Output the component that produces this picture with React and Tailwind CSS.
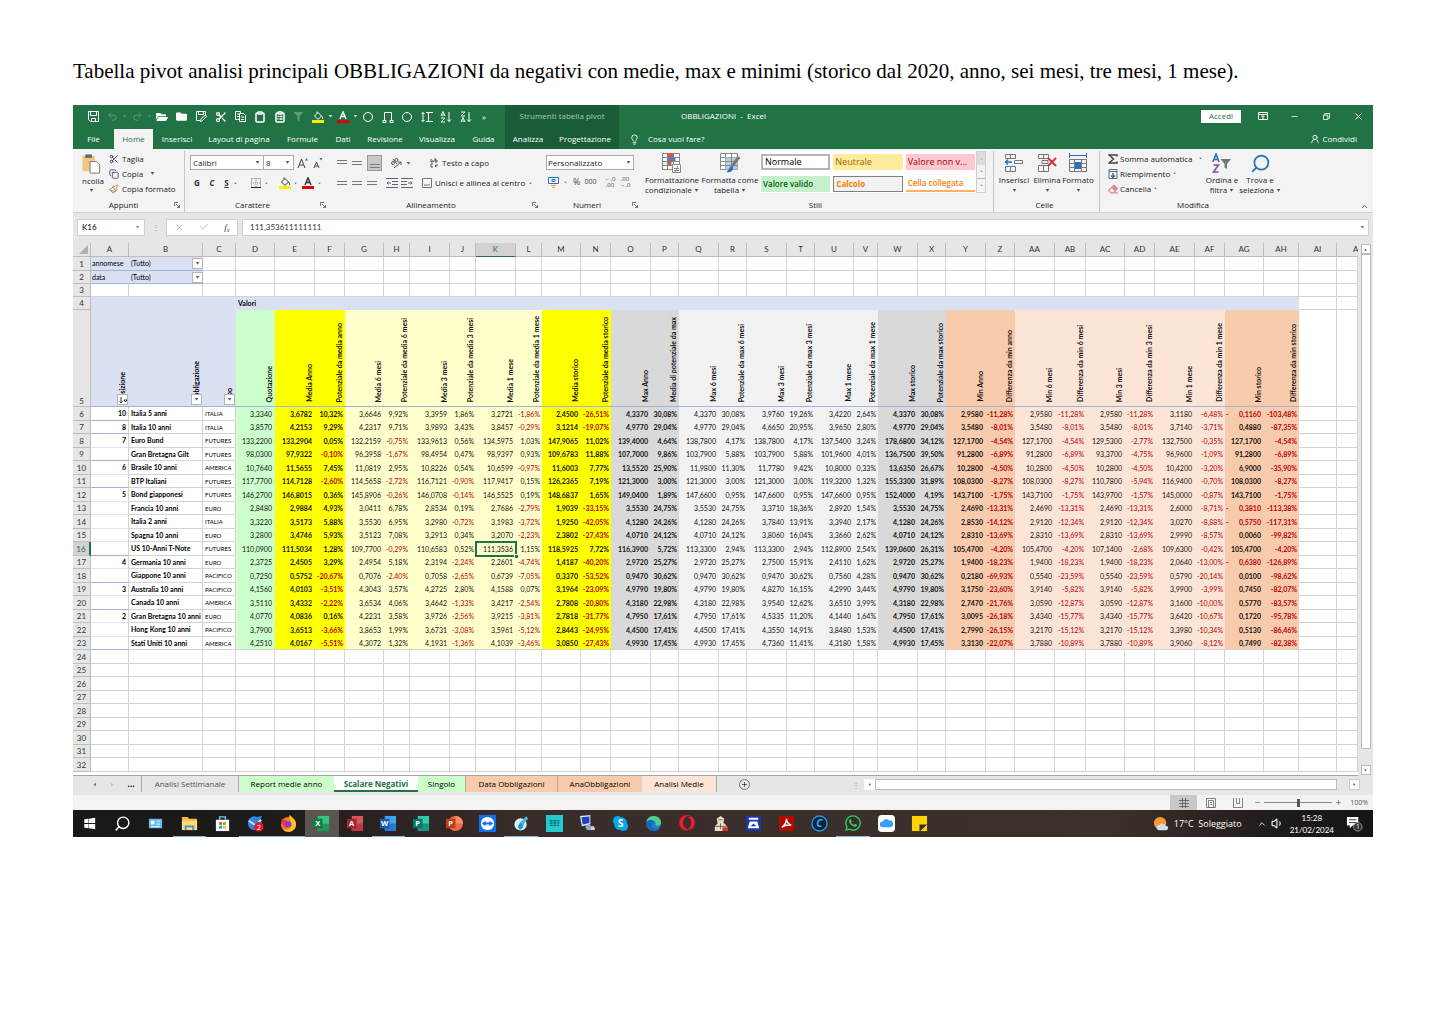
import React from "react";
import {
  Undo2, Redo2, Scissors, Copy, Clipboard, ClipboardList, Check, X, Lightbulb,
  UserRound, Search, Volume1, ChevronUp, Minus, Plus, Paintbrush,
} from "lucide-react";
import { FaFolder, FaFolderOpen, FaFilter, FaFirefoxBrowser, FaEdge, FaOpera, FaWhatsapp, FaEraser } from "react-icons/fa";

/* ---------- data ---------- */

const COLUMNS = [
  ["D", "w-[39px]", "Quotazione", "bg-[#ccffcc]", "value"],
  ["E", "w-[40px]", "Media Anno", "bg-[#ffff00]", "value", true],
  ["F", "w-[30px]", "Potenziale da media anno", "bg-[#ffff00]", "pct", true],
  ["G", "w-[39px]", "Media 6 mesi", "bg-[#ffffcc]", "value"],
  ["H", "w-[26px]", "Potenziale da media 6 mesi", "bg-[#ffffcc]", "pct"],
  ["I", "w-[40px]", "Media 3 mesi", "bg-[#ffffcc]", "value"],
  ["J", "w-[26px]", "Potenziale da media 3 mesi", "bg-[#ffffcc]", "pct"],
  ["K", "w-[40px]", "Media 1 mese", "bg-[#ffffcc]", "value"],
  ["L", "w-[26px]", "Potenziale da media 1 mese", "bg-[#ffffcc]", "pct"],
  ["M", "w-[39px]", "Media storico", "bg-[#ffff00]", "value", true],
  ["N", "w-[30px]", "Potenziale da media storico", "bg-[#ffff00]", "pct", true],
  ["O", "w-[40px]", "Max Anno", "bg-[#d9d9d9]", "value", true],
  ["P", "w-[28px]", "Media di potenziale da max", "bg-[#d9d9d9]", "pct", true],
  ["Q", "w-[40px]", "Max 6 mesi", "bg-[#f2f2f2]", "value"],
  ["R", "w-[28px]", "Potenziale da max 6 mesi", "bg-[#f2f2f2]", "pct"],
  ["S", "w-[40px]", "Max 3 mesi", "bg-[#f2f2f2]", "value"],
  ["T", "w-[28px]", "Potenziale da max 3 mesi", "bg-[#f2f2f2]", "pct"],
  ["U", "w-[39px]", "Max 1 mese", "bg-[#f2f2f2]", "value"],
  ["V", "w-[24px]", "Potenziale da max 1 mese", "bg-[#f2f2f2]", "pct"],
  ["W", "w-[40px]", "Max storico", "bg-[#d9d9d9]", "value", true],
  ["X", "w-[28px]", "Potenziale da max storico", "bg-[#d9d9d9]", "pct", true],
  ["Y", "w-[40px]", "Min Anno", "bg-[#f8cbad]", "value", true],
  ["Z", "w-[29px]", "Differenza da min anno", "bg-[#f8cbad]", "pct", true],
  ["AA", "w-[40px]", "Min 6 mesi", "bg-[#fce4d6]", "value"],
  ["AB", "w-[31px]", "Differenza da min 6 mesi", "bg-[#fce4d6]", "pct"],
  ["AC", "w-[39px]", "Min 3 mesi", "bg-[#fce4d6]", "value"],
  ["AD", "w-[30px]", "Differenza da min 3 mesi", "bg-[#fce4d6]", "pct"],
  ["AE", "w-[40px]", "Min 1 mese", "bg-[#fce4d6]", "value"],
  ["AF", "w-[30px]", "Differenza da min 1 mese", "bg-[#fce4d6]", "pct"],
  ["AG", "w-[39px]", "Min storico", "bg-[#f8cbad]", "value", true],
  ["AH", "w-[35px]", "Differenza da min storico", "bg-[#f8cbad]", "pct", true],
].map(([id, width, label, fill, kind, bold]) => ({ id, width, label, fill, kind, bold }));

/* score, bond, area, quote followed by one reference value for each value column */
const BONDS = [
  ["10", "Italia 5 anni", "ITALIA", [3.334, 3.6782, 3.6646, 3.3959, 3.2721, 2.45, 4.337, 4.337, 3.976, 3.422, 4.337, 2.958, 2.958, 2.958, 3.118, -0.116], true],
  ["8", "Italia 10 anni", "ITALIA", [3.857, 4.2153, 4.2317, 3.9893, 3.8457, 3.1214, 4.977, 4.977, 4.665, 3.965, 4.977, 3.548, 3.548, 3.548, 3.714, 0.488], true],
  ["7", "Euro Bund", "FUTURES", [133.22, 133.2904, 132.2159, 133.9613, 134.5975, 147.9065, 139.4, 138.78, 138.78, 137.54, 178.68, 127.17, 127.17, 129.53, 132.75, 127.17], false],
  ["", "Gran Bretagna Gilt", "FUTURES", [98.03, 97.9322, 96.3958, 98.4954, 98.9397, 109.6783, 107.7, 103.79, 103.79, 101.96, 136.75, 91.28, 91.28, 93.37, 96.96, 91.28], true],
  ["6", "Brasile 10 anni", "AMERICA", [10.764, 11.5655, 11.0819, 10.8226, 10.6599, 11.6003, 13.552, 11.98, 11.778, 10.8, 13.635, 10.28, 10.28, 10.28, 10.42, 6.9], false],
  ["", "BTP Italiani", "FUTURES", [117.77, 114.7128, 114.5658, 116.7121, 117.9417, 126.2365, 121.3, 121.3, 121.3, 119.32, 155.33, 108.03, 108.03, 110.78, 116.94, 108.03], true],
  ["5", "Bond giapponesi", "FUTURES", [146.27, 146.8015, 145.8906, 146.0708, 146.5525, 148.6837, 149.04, 147.66, 147.66, 147.66, 152.4, 143.71, 143.71, 143.97, 145, 143.71], false],
  ["", "Francia 10 anni", "EURO", [2.848, 2.9884, 3.0411, 2.8534, 2.7686, 1.9039, 3.553, 3.553, 3.371, 2.892, 3.553, 2.469, 2.469, 2.469, 2.6, -0.381], false],
  ["", "Italia 2 anni", "ITALIA", [3.322, 3.5173, 3.553, 3.298, 3.1983, 1.925, 4.128, 4.128, 3.784, 3.394, 4.128, 2.853, 2.912, 2.912, 3.027, -0.575], false],
  ["", "Spagna 10 anni", "EURO", [3.28, 3.4746, 3.5123, 3.2913, 3.207, 2.3802, 4.071, 4.071, 3.806, 3.366, 4.071, 2.831, 2.831, 2.831, 2.999, 0.006], false],
  ["", "US 10-Anni T-Note", "FUTURES", [110.09, 111.5034, 109.77, 110.6583, 111.3536, 118.5925, 116.39, 113.33, 113.33, 112.89, 139.06, 105.47, 105.47, 107.14, 109.63, 105.47], true],
  ["4", "Germania 10 anni", "EURO", [2.3725, 2.4505, 2.4954, 2.3194, 2.2601, 1.4187, 2.972, 2.972, 2.75, 2.411, 2.972, 1.94, 1.94, 1.94, 2.064, -0.638], false],
  ["", "Giappone 10 anni", "PACIFICO", [0.725, 0.57515, 0.7076, 0.7058, 0.6739, 0.337, 0.947, 0.947, 0.947, 0.756, 0.947, 0.218, 0.554, 0.554, 0.579, 0.01], true],
  ["3", "Australia 10 anni", "PACIFICO", [4.156, 4.0103, 4.3043, 4.2725, 4.1588, 3.1964, 4.979, 4.979, 4.827, 4.299, 4.979, 3.175, 3.914, 3.914, 3.99, 0.745], false],
  ["", "Canada 10 anni", "AMERICA", [3.511, 3.4332, 3.6534, 3.4642, 3.4217, 2.7808, 4.318, 4.318, 3.954, 3.651, 4.318, 2.747, 3.059, 3.059, 3.16, 0.577], true],
  ["2", "Gran Bretagna 10 anni", "EURO", [4.077, 4.0836, 4.2231, 3.9726, 3.9215, 2.7818, 4.795, 4.795, 4.5335, 4.144, 4.795, 3.0095, 3.434, 3.434, 3.642, 0.172], false],
  ["", "Hong Kong 10 anni", "PACIFICO", [3.79, 3.6513, 3.8653, 3.6731, 3.5961, 2.8443, 4.45, 4.45, 4.355, 3.848, 4.45, 2.799, 3.217, 3.217, 3.398, 0.513], false],
  ["", "Stati Uniti 10 anni", "AMERICA", [4.251, 4.0167, 4.3072, 4.1931, 4.1039, 3.085, 4.993, 4.993, 4.736, 4.318, 4.993, 3.313, 3.788, 3.788, 3.906, 0.749], true],
].map(([score, name, area, values, last]) => ({ score, name, area, values, last }));

const it = (n, digits) => n.toFixed(digits).replace(".", ",");
const rowHeight = (n) => (n === 1 || (n > 5 && n % 2 === 0) ? "h-[14px]" : "h-[13px]");

/* ---------- small parts ---------- */

const Caret = ({ className = "" }) => (
  <svg viewBox="0 0 6 4" className={`h-[3px] w-[5px] shrink-0 opacity-75 ${className}`} fill="currentColor"><path d="M.5 0h5L3 3.500z" /></svg>
);

const Q = ({ label, wide = "w-5", children }) => (
  <button aria-label={label} className={`flex h-5 ${wide} shrink-0 items-center justify-center`}>{children}</button>
);

const Bucket = ({ className = "" }) => (
  <svg viewBox="0 0 12 12" className={`h-3 w-3 ${className}`} fill="none" stroke="currentColor">
    <path d="M2.5 5 6 1.5 9.5 5 6 8.5zM5 2V.5M9.5 5c1 1 1.500 2 1 3" />
    <path d="M0 10.500h12" stroke="#ffee00" strokeWidth="3" />
  </svg>
);

const FontColor = () => (
  <svg viewBox="0 0 12 12" className="h-3 w-3" fill="none" stroke="currentColor" strokeWidth="1.400">
    <path d="M3 8 6 .8 9 8M4 5.500h4" />
    <path d="M0 10.500h12" stroke="#e00000" strokeWidth="3" />
  </svg>
);

const SortIcon = ({ up }) => (
  <svg viewBox="0 0 12 12" className="h-3 w-3" fill="none" stroke="currentColor">
    {up ? <path d="M1 1h4L1 5h4M1 11l2-4.500 2 4.500M1.500 10h3" /> : <path d="M1 5l2-4.500 2 4.500M1.500 4h3M1 7h4l-4 4h4" />}
    <path d="M9 1v9.500M7 8.500l2 2 2-2" />
  </svg>
);

const Lines = ({ rows }) => (
  <svg viewBox="0 0 10 10" className="h-[10px] w-[10px]" stroke="#777" fill="none">
    {rows.map((y) => <path key={y} d={`M0 ${y}.5h10`} />)}
  </svg>
);

const IndentIcon = ({ flip }) => (
  <svg viewBox="0 0 12 10" className={`h-[10px] w-3 ${flip ? "-scale-x-100" : ""}`} fill="none" stroke="#666">
    <path d="M0 .5h12M6 3.500h6M6 6.500h6M0 9.500h12" /><path d="M5 5H1M2.500 3.500 1 5l1.500 1.500" stroke="#2b72b9" />
  </svg>
);

const Launcher = () => (
  <button aria-label="Altre opzioni">
    <svg viewBox="0 0 6 6" className="h-[6px] w-[6px]" fill="none" stroke="#555" strokeWidth=".8"><path d="M.5 4V.5H4M2 2l3.500 3.500M5.500 3v2.500H3" /></svg>
  </button>
);

function Group({ label, width, launcher, border, children }) {
  return (
    <section className={`flex shrink-0 flex-col ${width} ${border ? "border-r border-[#c6c6c6]" : ""}`} aria-label={label}>
      <div className="flex h-[48px]">{children}</div>
      <div className="flex items-center pr-1 leading-[12px]">
        <span className="flex-1 text-center">{label}</span>
        {launcher && <Launcher />}
      </div>
    </section>
  );
}

const BigButton = ({ icon, lines, width, caretBelow }) => (
  <button className={`flex ${width} shrink-0 flex-col items-center leading-[10px] whitespace-nowrap`}>
    <span className="flex h-6 items-center">{icon}</span>
    <span>{lines[0]}</span>
    {caretBelow ? <Caret className="mt-1" /> : <span className="flex items-center gap-[2px]">{lines[1]}<Caret /></span>}
  </button>
);

/* ---------- title bar and tabs ---------- */

const TABS = [
  ["File", "w-[41px]"], ["Home", "w-[39px]"], ["Inserisci", "w-[48px]"], ["Layout di pagina", "w-[76px]"], ["Formule", "w-[51px]"],
  ["Dati", "w-[30px]"], ["Revisione", "w-[54px]"], ["Visualizza", "w-[50px]"], ["Guida", "w-[43px]"],
];

function Header() {
  return (
    <header className="flex h-11 bg-[#217346] text-white">
      <div className="w-[432px] shrink-0">
        <div className="flex h-6 items-center pb-px pl-[10px]">
          <Q label="Salva"><svg viewBox="0 0 11 11" className="size-[11px]" fill="none" stroke="currentColor"><path d="M.5.5h10v10H2.500l-2-2zM2.500.5v4h6v-4M3.500 10V7.500h4V10" /></svg></Q>
          <span className="flex items-center text-[#5f9b7a]">
            <Q label="Annulla" wide="w-[19px]"><Undo2 size={11} /></Q><Caret />
            <Q label="Ripeti"><Redo2 size={11} /></Q><Caret />
          </span>
          <Q label="Apri"><FaFolderOpen size={12} /></Q>
          <Q label="Cartella" wide="w-[19px]"><FaFolder size={11} /></Q>
          <Q label="Salva con nome"><svg viewBox="0 0 11 11" className="size-[11px]" fill="none" stroke="currentColor"><path d="M9.500 4V.5h-9v9H4M2.500.5v3h5v-3M4.500 10.500 5 8l4.500-4 1 1.500L6 10z" /></svg></Q>
          <Q label="Taglia"><Scissors size={12} strokeWidth={2.500} /></Q>
          <Q label="Copia" wide="w-[19px]"><svg viewBox="0 0 11 11" className="size-[11px]" fill="none" stroke="currentColor"><path d="M4 8.500H.5v-8h5v2M4.500 2.500h4l2 2v6h-6zM6 6h3M6 8.500h3M2 3h2M2 5.500h2" /></svg></Q>
          <Q label="Incolla"><Clipboard size={12} strokeWidth={3} /></Q>
          <Q label="Incolla valori" wide="w-[19px]"><ClipboardList size={12} strokeWidth={3} /></Q>
          <Q label="Filtro" wide="w-[19px]"><FaFilter size={9} className="text-[#5f9b7a]" /></Q>
          <Q label="Colore riempimento"><Bucket /></Q><Caret />
          <Q label="Colore carattere"><FontColor /></Q><Caret />
          <Q label="Ovale"><svg viewBox="0 0 10 10" className="size-[10px]" fill="none" stroke="currentColor"><circle cx="5" cy="5" r="4.500" /></svg></Q>
          <Q label="Rettangolo" wide="w-[19px]"><svg viewBox="0 0 12 12" className="size-3" fill="none" stroke="currentColor"><path d="M2.500 9V1.500h7V9M1 9.500h3v2H1zM8 9.500h3v2H8z" /></svg></Q>
          <Q label="Cerchio"><svg viewBox="0 0 10 10" className="size-[10px]" fill="none" stroke="currentColor"><circle cx="5" cy="5" r="4.500" /></svg></Q>
          <Q label="Altezza riga" wide="w-[19px]"><svg viewBox="0 0 12 12" className="size-3" fill="none" stroke="currentColor"><path d="M5 1.500h7M5 10.500h7M2 1.500v9M.5 3 2 1.500 3.500 3M.5 9 2 10.500 3.500 9M7.500 1.500v9" /></svg></Q>
          <Q label="Ordina dalla A alla Z"><SortIcon /></Q>
          <Q label="Ordina dalla Z alla A" wide="w-[19px]"><SortIcon up /></Q>
          <Q label="Altri comandi" wide="w-[18px]">»</Q>
        </div>
        <nav className="flex h-5">
          {TABS.map(([t, w]) => (
            <button key={t} className={`${w} whitespace-nowrap ${t === "Home" ? "bg-[#f3f3f3] text-[#217346]" : ""}`}>{t}</button>
          ))}
        </nav>
      </div>
      <div className="w-[114px] shrink-0 bg-[#1a5c38]">
        <div className="flex h-6 items-center justify-center pb-[2px] text-[#a9c8b6]">Strumenti tabella pivot</div>
        <div className="flex h-5">
          <button className="w-[46px]">Analizza</button>
          <button className="w-[68px]">Progettazione</button>
        </div>
      </div>
      <div className="min-w-0 flex-1">
        <div className="flex h-6 items-center pb-[2px]">
          <h1 className="pl-[62px]">OBBLIGAZIONI&nbsp; -&nbsp; Excel</h1>
          <div className="ml-auto flex items-center pr-[6px]">
            <button className="h-[13px] w-10 bg-white text-[#217346]">Accedi</button>
            <button aria-label="Opzioni barra multifunzione" className="flex w-11 justify-center">
              <svg viewBox="0 0 10 8" className="h-2 w-[10px]" fill="none" stroke="currentColor"><path d="M.5.5h9v7h-9zM.5 2.500h9M5 7V4M3.500 5 5 3.500 6.500 5" /></svg>
            </button>
            <button aria-label="Riduci a icona" className="flex w-[18px] justify-center"><Minus size={9} /></button>
            <button aria-label="Ripristina" className="flex w-[46px] justify-center">
              <svg viewBox="0 0 8 8" className="size-[7px]" fill="none" stroke="currentColor"><path d="M.5 2.500h5v5h-5zM2 2V.5h5.500V6H6" /></svg>
            </button>
            <button aria-label="Chiudi" className="flex w-[18px] justify-center"><X size={11} /></button>
          </div>
        </div>
        <div className="flex h-5 items-center pr-4 pl-[10px]">
          <Lightbulb size={11} />
          <button className="ml-2">Cosa vuoi fare?</button>
          <button className="ml-auto flex items-center gap-[2px]"><UserRound size={10} />Condividi</button>
        </div>
      </div>
    </header>
  );
}

/* ---------- ribbon ---------- */

const STYLES = [
  ["Normale", "border-2 border-[#b5b5b5] bg-white text-black"],
  ["Neutrale", "bg-[#ffeb9c] text-[#9c6500]"],
  ["Valore non v...", "bg-[#ffc7ce] text-[#9c0006]"],
  ["Valore valido", "bg-[#c6efce] text-[8px] font-semibold text-[#006100]"],
  ["Calcolo", "border border-[#7f7f7f] bg-[#f2f2f2] text-[8px] font-bold text-[#fa7d00]"],
  ["Cella collegata", "border-b-2 border-[#ffb060] text-[8px] font-semibold text-[#fa7d00]"],
];

const GridIcon = ({ children }) => (
  <svg viewBox="0 0 20 20" className="size-5" fill="none" stroke="#888">
    <path d="M.5.5h17v16H.5zM.5 4.500h17M.5 8.500h17M.5 12.500h17M5.500.5v16M11.500.5v16" fill="#fff" />
    {children}
  </svg>
);

function Ribbon() {
  return (
    <div className="flex h-[64px] border-b border-[#d0d0d0] bg-[#f3f3f3] pt-[2px] text-[#222]">
      <Group label="Appunti" width="w-[112px]" launcher border>
        <button className="flex w-9 flex-col items-center pt-[2px] leading-[10px]">
          <svg viewBox="0 0 20 22" className="h-[21px] w-5"><path d="M1 3h13v16H1z" fill="#edc87e" /><path d="M4 1.500h7V5H4z" fill="#666" /><path d="M9 9h7l3 3v9H9z" fill="#fff" stroke="#777" /></svg>
          <span className="mt-[2px] ml-1">ncolla</span>
          <Caret className="mt-[3px]" />
        </button>
        <div className="flex flex-col">
          <button className="flex h-[15px] items-center gap-[3px]"><Scissors size={10} color="#336" />Taglia</button>
          <button className="flex h-[15px] items-center gap-[3px]"><Copy size={10} color="#446" />Copia <Caret className="ml-1" /></button>
          <button className="flex h-[15px] items-center gap-[3px] whitespace-nowrap"><Paintbrush size={10} color="#a87b3a" />Copia formato</button>
        </div>
      </Group>

      <Group label="Carattere" width="w-[145px]" launcher>
        <div className="pt-1 pl-[5px]">
          <div className="flex items-center">
            <label className="flex h-[15px] w-[74px] items-center border border-[#ababab] bg-white pr-[3px]">
              <select aria-label="Tipo di carattere" className="h-[13px] min-w-0 flex-1 appearance-none bg-transparent pl-[2px] leading-none"><option>Calibri</option></select><Caret />
            </label>
            <label className="flex h-[15px] w-[30px] items-center border border-l-0 border-[#ababab] bg-white pr-[3px]">
              <select aria-label="Dimensione carattere" className="h-[13px] min-w-0 flex-1 appearance-none bg-transparent pl-[2px] leading-none"><option>8</option></select><Caret />
            </label>
            <button aria-label="Aumenta dimensione" className="ml-[3px]"><svg viewBox="0 0 12 12" className="size-3" fill="none" stroke="#444"><path d="M1 11 4.500 2 8 11M2.500 8h4" /><path d="M8 3.500 9.500 1 11 3.500z" fill="#2b72b9" stroke="none" /></svg></button>
            <button aria-label="Riduci dimensione" className="ml-[3px]"><svg viewBox="0 0 12 12" className="size-3" fill="none" stroke="#444"><path d="M2 11l2.500-6L7 11M3 9h3" /><path d="M7.500 1h3L9 3.500z" fill="#2b72b9" stroke="none" /></svg></button>
          </div>
          <div className="mt-[7px] flex h-3 items-center text-[#333]">
            <button className="w-[14px] font-bold">G</button>
            <button className="w-[16px] font-bold italic">C</button>
            <button className="w-[13px] font-bold underline">S</button><Caret className="scale-75" />
            <button aria-label="Bordi" className="ml-[13px] flex"><svg viewBox="0 0 10 10" className="size-[10px]" fill="none" stroke="#777" strokeDasharray="1 1"><path d="M.5.5h9v9h-9zM5 0v10M0 5h10" /><path d="M0 9.500h10" stroke="#333" strokeDasharray="none" /></svg></button>
            <Caret className="ml-[3px] scale-75" />
            <button aria-label="Riempimento" className="ml-[10px]"><Bucket /></button><Caret className="ml-[2px] scale-75" />
            <button aria-label="Colore testo" className="ml-[4px]"><FontColor /></button><Caret className="ml-[3px] scale-75" />
          </div>
        </div>
      </Group>

      <Group label="Allineamento" width="w-[212px]" launcher>
        <div className="pt-[4px] pl-[7px]">
          <div className="flex h-4 items-center">
            <span className="flex items-center gap-[5px]">
              <button aria-label="In alto"><Lines rows={[2, 5]} /></button>
              <button aria-label="Al centro"><Lines rows={[3, 6]} /></button>
              <button aria-label="In basso" className="flex h-4 w-[15px] items-center justify-center border border-[#999] bg-[#c8c8c8]"><Lines rows={[6, 9]} /></button>
            </span>
            <button aria-label="Orientamento" className="ml-2 flex items-center gap-1 text-[#444]"><svg viewBox="0 0 12 12" className="size-3" fill="none" stroke="#555"><circle cx="3" cy="6" r="1.500" /><circle cx="6.500" cy="3" r="1.500" /><path d="M3 2l4 5M4 11l7-6M11 8V5H8" /></svg><Caret /></button>
            <button className="ml-[19px] flex items-center gap-1"><svg viewBox="0 0 8 10" className="h-[10px] w-2" fill="none" stroke="#555"><path d="M1 1v3h2V2M5 0v4h2V2H5M3 6H1v3h2M7 6v2H5M6 7 5 8l1 1" /></svg>Testo a capo</button>
          </div>
          <div className="mt-1 flex h-4 items-center">
            <span className="flex gap-[5px]">
              <button aria-label="Allinea a sinistra"><Lines rows={[3, 6]} /></button>
              <button aria-label="Centra"><Lines rows={[3, 6]} /></button>
              <button aria-label="Allinea a destra"><Lines rows={[3, 6]} /></button>
            </span>
            <button aria-label="Riduci rientro" className="ml-[9px]"><IndentIcon /></button>
            <button aria-label="Aumenta rientro" className="ml-[3px]"><IndentIcon flip /></button>
            <button className="ml-[9px] flex items-center gap-[3px] whitespace-nowrap">
              <svg viewBox="0 0 10 10" className="size-[10px]" fill="none" stroke="#777"><path d="M.5.5h9v9h-9zM2 7h6" /></svg>Unisci e allinea al centro
            </button>
            <Caret className="ml-[3px] scale-75" />
          </div>
        </div>
      </Group>

      <Group label="Numeri" width="w-[100px]" launcher>
        <div className="pt-1 pl-[4px]">
          <label className="flex h-[15px] w-[88px] items-center border border-[#ababab] bg-white pr-[2px]">
            <select aria-label="Formato numero" className="h-[13px] min-w-0 flex-1 appearance-none bg-transparent pl-[1px] leading-none"><option>Personalizzato</option></select><Caret />
          </label>
          <div className="mt-[6px] flex h-3 items-center text-[#444]">
            <button aria-label="Formato contabilità"><svg viewBox="0 0 14 12" className="h-3 w-[14px]" fill="none" stroke="#2b72b9"><path d="M2.500 1.500h10v6h-10zM6 3.500h3v2H6z" /><path d="M5 9.500h5M6 11.500h3" stroke="#e8a33d" /></svg></button>
            <Caret className="ml-[3px] scale-75" />
            <button className="ml-[5px] text-[9px]">%</button>
            <button className="ml-1 text-[7px]">000</button>
            <button className="ml-2 text-[6px] leading-[6px]">←,0<br />,00</button>
            <button className="ml-[4px] text-[6px] leading-[6px]">,00<br />→,0</button>
          </div>
        </div>
      </Group>

      <Group label="Stili" width="w-[352px]" border>
        <BigButton width="w-[60px]" lines={["Formattazione", "condizionale"]} icon={<GridIcon><path d="M5.500.5h6v4h-6zM5.500 8.500h4v4h-4z" fill="#e0553b" stroke="none" /><path d="M5.500 4.500h8v4h-8z" fill="#4a7fbf" stroke="none" /><path d="M10.500 11.500h8v8h-8z" fill="#fff" /><path d="M12 17.500h5M12 15.500h5M16 13l-3 6" /></GridIcon>} />
        <BigButton width="w-[56px]" lines={["Formatta come", "tabella"]} icon={<GridIcon><path d="M5.500 4.500h12v12h-12z" fill="#b9cde8" stroke="none" /><path d="M5.500 8.500h12M5.500 12.500h12M11.500 4v12" /><path d="M19 4l-7 9" stroke="#777" strokeWidth="3" /><path d="M12 13c-3 0-3 5-6 6 4 1 8-1 7-5z" fill="#2b72b9" stroke="none" /></GridIcon>} />
        <div className="ml-[2px] grid h-[42px] w-[216px] grid-cols-3 gap-x-[3px] gap-y-[4px] self-start bg-white px-px pt-[3px] text-[9px]">
          {STYLES.map(([name, cls]) => (
            <button key={name} className={`flex h-4 items-center overflow-hidden pl-[2px] whitespace-nowrap ${cls}`}>{name}</button>
          ))}
        </div>
        <div className="flex h-[42px] w-[10px] flex-col border border-[#d0d0d0] text-[#555]">
          <button aria-label="Stili precedenti" className="flex flex-1 items-center justify-center bg-[#dcdcdc]"><Caret className="rotate-180 scale-75 text-[#aaa]" /></button>
          <button aria-label="Stili successivi" className="flex flex-1 items-center justify-center"><Caret className="scale-75" /></button>
          <button aria-label="Altri stili" className="flex flex-1 items-center justify-center border-t border-[#bbb]"><Caret className="scale-75" /></button>
        </div>
      </Group>

      <Group label="Celle" width="w-[106px]" border>
        <BigButton caretBelow width="w-[40px]" lines={["Inserisci"]} icon={<svg viewBox="0 0 20 20" className="size-5" fill="none" stroke="#777"><path d="M1.500 1.500h10v4h-10zM6.500 1.500v4M1.500 13.500h10v5h-10zM6.500 13.500v5M10.500 7.500h8v3h-8z" /><path d="M8 9H1M4 6.500 1.500 9 4 11.500" stroke="#2b72b9" strokeWidth="1.500" /></svg>} />
        <BigButton caretBelow width="w-[26px]" lines={["Elimina"]} icon={<svg viewBox="0 0 20 20" className="size-5" fill="none" stroke="#777"><path d="M1.500 1.500h10v4h-10zM6.500 1.500v4M1.500 12.500h10v6h-10zM6.500 12.500v6M5 7.500h6v3H5z" /><path d="M11 5l8 8M19 5l-8 8" stroke="#d13438" strokeWidth="2" /></svg>} />
        <BigButton caretBelow width="w-[36px]" lines={["Formato"]} icon={<svg viewBox="0 0 20 20" className="size-5" fill="none" stroke="#777"><path d="M1.500 6.500h17v12h-17zM1.500 10.500h17M1.500 14.500h17M6.500 6.500v12M13.500 6.500v12" /><path d="M7 9h6v7H7z" fill="#2b72b9" stroke="none" /><path d="M1 2.500h18M1.500 0v5M18.500 0v5" stroke="#2b72b9" /></svg>} />
      </Group>

      <section aria-label="Modifica" className="flex min-w-0 flex-1">
        <div className="flex w-[186px] flex-col">
          <div className="flex h-[48px]">
            <div className="ml-2 flex w-24 flex-col">
              <button className="flex h-[15px] items-center gap-[2px] whitespace-nowrap"><svg viewBox="0 0 10 10" className="size-[10px]" fill="none" stroke="#444" strokeWidth="1.500"><path d="M9 2.500V1H1l4.500 4L1 9h8V7.500" /></svg>Somma automatica<Caret className="ml-[3px] scale-75" /></button>
              <button className="flex h-[15px] items-center gap-[2px]"><svg viewBox="0 0 10 10" className="size-[10px]" fill="none" stroke="#666"><path d="M1 .5h8v9H1zM1 2.500h8" /><path d="M5 4v4M3 6.500l2 2 2-2" stroke="#2b72b9" strokeWidth="1.500" /></svg>Riempimento<Caret className="scale-75" /></button>
              <button className="flex h-[15px] items-center gap-[2px]"><FaEraser size={10} color="#e08a98" />Cancella<Caret className="scale-75" /></button>
            </div>
            <BigButton width="w-[36px]" lines={["Ordina e", "filtra"]} icon={<svg viewBox="0 0 20 20" className="size-5" fill="none" strokeWidth="1.600"><path d="M1 9 4 1l3 8M2 6.500h4" stroke="#2b72b9" /><path d="M1.500 12h5l-5 7h5" stroke="#8b4ca8" /><path d="M8.500 6H19l-4 5v5l-2.500-1.500V11z" fill="#777" /></svg>} />
            <BigButton width="w-[40px]" lines={["Trova e", "seleziona"]} icon={<Search size={21} color="#2b72b9" className="-scale-x-100" />} />
          </div>
          <span className="text-center leading-[12px]">Modifica</span>
        </div>
        <button aria-label="Comprimi barra multifunzione" className="mr-1 mb-px ml-auto self-end"><ChevronUp size={9} /></button>
      </section>
    </div>
  );
}

function FormulaBar() {
  return (
    <div className="flex h-[30px] items-center pr-1 pb-[2px] pl-1 font-[Lato] text-[8px]">
      <label className="flex h-[17px] w-[68px] items-center border border-[#d0d0d0] bg-white pr-1 pl-1">
        <input aria-label="Casella nome" defaultValue="K16" className="w-0 flex-1 bg-transparent outline-none" /><Caret className="text-[#777]" />
      </label>
      <span className="w-[21px] text-center text-[#999]">⋮</span>
      <div className="flex h-[17px] w-[72px] items-center justify-around border border-[#d0d0d0] bg-white text-[#aaa]">
        <button aria-label="Annulla immissione"><X size={9} /></button>
        <button aria-label="Conferma"><Check size={10} /></button>
        <button aria-label="Inserisci funzione" className="font-[Liberation_Serif] text-[9px] text-[#333] italic">f<sub className="text-[6px]">x</sub></button>
      </div>
      <label className="ml-1 flex h-[17px] flex-1 items-center border border-[#d0d0d0] bg-white pr-[3px] pl-[7px]">
        <input aria-label="Barra della formula" defaultValue="111,353611111111" className="min-w-0 flex-1 bg-transparent text-[#333] outline-none" /><Caret className="text-[#555]" />
      </label>
    </div>
  );
}

/* ---------- worksheet ---------- */

const CELL = "border-r border-b border-[#d4d4d4] p-0";
const FilterButton = ({ sorted }) => (
  <button aria-label="Filtro" className="flex h-[11px] w-[11px] items-center justify-center border border-[#b5b5b5] bg-white text-[#333]">
    {sorted ? <svg viewBox="0 0 8 8" className="size-2" fill="none" stroke="currentColor"><path d="M2 1v6M.5 5.500 2 7l1.500-1.500M5 4h3L6.500 6z" /></svg> : <Caret />}
  </button>
);

const Vertical = ({ children }) => (
  <span className="ml-auto block rotate-180 text-left whitespace-nowrap [writing-mode:vertical-rl]">{children}</span>
);

const RowNumber = ({ n }) => (
  <th scope="row" className={`border-r border-b border-[#bdbdbd] p-0 text-center text-[8px] leading-[10px] font-normal ${n === 16 ? "border-r-2 border-r-[#217346] bg-[#d2d2d2] text-[#217346]" : "bg-[#e6e6e6] text-[#333]"} ${n === 5 ? "align-bottom" : "align-middle"}`}>{n}</th>
);

function BlankCells() {
  return <>{["A", "B", "C", ...COLUMNS.map((c) => c.id), "AI", "AJ"].map((c) => <td key={c} className={CELL} />)}</>;
}

function PivotRow({ bond, n }) {
  const quote = bond.values[0];
  let vi = -1;
  const lastRow = n === 23;
  return (
    <tr className={rowHeight(n)}>
      <RowNumber n={n} />
      <td className={`border-r border-b border-r-[#d4d4d4] p-0 pr-[2px] text-right font-bold ${bond.last ? "border-b-[#9fb4dc]" : "border-b-[#dfe6f2]"}`}>{bond.score}</td>
      <td className={`${CELL} pl-[2px] font-bold`}>{bond.name}</td>
      <td className={`${CELL} pl-[2px] text-[6px]`}>{bond.area}</td>
      {COLUMNS.map((c) => {
        if (c.kind === "value") vi += 1;
        const v = bond.values[vi];
        const num = c.kind === "value" ? v : (v / quote - 1) * 100;
        const text = c.kind === "value" ? it(Math.abs(v), 4) : `${it(num, 2)}%`;
        const active = n === 16 && c.id === "K";
        return (
          <td key={c.id} className={`p-0 text-right ${c.fill} ${c.kind === "value" ? "pr-[3px]" : "pr-[2px]"} ${c.bold ? "font-bold" : ""} ${num < 0 ? "text-[#b80000]" : "text-[#111]"} ${active ? "relative outline-2 -outline-offset-1 outline-[#217346]" : ""} ${lastRow ? "border-b border-[#d4d4d4]" : ""}`}>
            {c.kind === "value" && v < 0 ? <span className="flex justify-between pl-px"><span>-</span>{text}</span> : text}
            {active && <span className="absolute -right-[2px] -bottom-[2px] size-[4px] border-t border-l border-white bg-[#217346]" />}
          </td>
        );
      })}
      <td className={CELL} />
      <td className={CELL} />
    </tr>
  );
}

function Sheet() {
  const pivotHead = "bg-[#d9e1f2] p-0";
  return (
    <div className="flex h-[533px]">
      <div className="min-w-0 flex-1 overflow-hidden border-b border-[#a6a6a6] bg-white">
        <table className="w-full table-fixed border-separate border-spacing-0 font-[Lato] text-[7px] leading-[9px] whitespace-nowrap">
          <colgroup>
            <col className="w-[18px]" /><col className="w-[38px]" /><col className="w-[74px]" /><col className="w-[33px]" />
            {COLUMNS.map((c) => <col key={c.id} className={c.width} />)}
            <col className="w-[38px]" /><col />
          </colgroup>
          <thead>
            <tr className="h-[14px] text-[8px] text-[#333]">
              <th aria-label="Seleziona tutto" className="border-r border-b border-[#bdbdbd] bg-[#e6e6e6] p-0">
                <svg viewBox="0 0 10 10" className="mr-[2px] ml-auto size-[9px]" fill="#b0b0b0"><path d="M10 0v10H0z" /></svg>
              </th>
              {["A", "B", "C", ...COLUMNS.map((c) => c.id), "AI"].map((c) => (
                <th key={c} scope="col" className={`overflow-hidden border-r border-b p-0 text-center font-normal ${c === "K" ? "border-[#217346] border-r-[#bdbdbd] bg-[#d2d2d2] text-[#217346]" : "border-[#bdbdbd] bg-[#e6e6e6]"}`}>{c}</th>
              ))}
              <th scope="col" className="overflow-hidden border-b border-[#bdbdbd] bg-[#e6e6e6] p-0 pl-4 text-left font-normal">AJ</th>
            </tr>
          </thead>
          <tbody>
            {["annomese", "data"].map((field, i) => (
              <tr key={field} className={rowHeight(i + 1)}>
                <RowNumber n={i + 1} />
                <td className="border-b border-[#9fb4dc] bg-[#d9e1f2] p-0 pl-px">{field}</td>
                <td className="border-b border-[#9fb4dc] bg-[#d9e1f2] p-0 pl-[2px]">
                  <span className="flex items-center justify-between">(Tutto)<FilterButton /></span>
                </td>
                <td className={CELL} />
                {COLUMNS.map((c) => <td key={c.id} className={CELL} />)}
                <td className={CELL} /><td className={CELL} />
              </tr>
            ))}
            <tr className={rowHeight(3)}><RowNumber n={3} /><BlankCells /></tr>
            <tr className={rowHeight(4)}>
              <RowNumber n={4} />
              <td className={pivotHead} /><td className={pivotHead} /><td className={pivotHead} />
              <td className={`${pivotHead} pl-[2px] font-bold`}>Valori</td>
              {COLUMNS.slice(1).map((c) => <td key={c.id} className={pivotHead} />)}
              <td className={CELL} /><td className={CELL} />
            </tr>
            <tr className="h-[97px] align-bottom">
              <RowNumber n={5} />
              {["Posizione", "Obbligazione", "Tipo"].map((h, i) => (
                <th key={h} className="relative border-b border-[#9fb4dc] bg-[#d9e1f2] p-0 pr-[2px] pb-1 align-bottom">
                  <Vertical>{h}</Vertical>
                  <span className="absolute right-px bottom-px"><FilterButton sorted={i === 0} /></span>
                </th>
              ))}
              {COLUMNS.map((c) => (
                <th key={c.id} className={`border-b border-[#9fb4dc] p-0 pr-px pb-1 align-bottom text-[#111] ${c.fill}`}><Vertical>{c.label}</Vertical></th>
              ))}
              <td className={CELL} /><td className={CELL} />
            </tr>
            {BONDS.map((b, i) => <PivotRow key={b.name} bond={b} n={i + 6} />)}
            {[24, 25, 26, 27, 28, 29, 30, 31, 32].map((n) => <tr key={n} className={rowHeight(n)}><RowNumber n={n} /><BlankCells /></tr>)}
          </tbody>
        </table>
      </div>
      <div className="flex w-[15px] flex-col items-center pb-px">
        <button aria-label="Scorri in alto" className="mt-px flex h-[10px] w-[10px] items-center justify-center border border-[#bbb] bg-white"><Caret className="rotate-180 scale-75" /></button>
        <span className="w-[10px] flex-1 border border-[#bbb] bg-white" />
        <span className="h-4" />
        <button aria-label="Scorri in basso" className="flex h-[10px] w-[10px] items-center justify-center border border-[#bbb] bg-white"><Caret className="scale-75" /></button>
      </div>
    </div>
  );
}

const SHEETS = [
  ["Analisi Settimanale", "w-[98px] border-x border-[#aaa] text-[#555]"],
  ["Report medie anno", "w-[95px] bg-[#ccffcc]"],
  ["Scalare Negativi", "w-[84px] border-y-2 border-t-white border-b-[#217346] bg-white font-bold text-[#217346]"],
  ["Singolo", "w-[48px] border-r border-[#aaa] bg-[#ccffcc]"],
  ["Data Obbligazioni", "w-[92px] border-r border-[#aaa] bg-[#f8cbad]"],
  ["AnaObbligazioni", "w-[84px] bg-[#f8cbad]"],
  ["Analisi Medie", "w-[75px] border-r border-[#aaa] bg-[#fce4d6]"],
];

function SheetTabs() {
  return (
    <div className="flex h-[19px] items-start bg-[#e6e6e6]">
      <div className="flex h-4 w-[68px] items-center justify-around pl-3">
        <button aria-label="Foglio precedente"><Caret className="rotate-90 text-[#217346]" /></button>
        <button aria-label="Foglio successivo"><Caret className="-rotate-90 text-[#bbb]" /></button>
        <button className="font-bold">...</button>
      </div>
      {SHEETS.map(([name, cls]) => <button key={name} className={`h-4 shrink-0 whitespace-nowrap ${cls}`}>{name}</button>)}
      <button aria-label="Nuovo foglio" className="mt-[3px] ml-[22px] flex size-[11px] items-center justify-center rounded-full border border-[#777]"><Plus size={7} /></button>
      <div className="ml-auto flex w-[521px] items-center pt-[3px]">
        <span className="w-3 leading-[11px] text-[#999]">⋮</span>
        <button aria-label="Scorri a sinistra" className="flex h-[11px] w-[11px] items-center justify-center bg-white"><Caret className="rotate-90 scale-75" /></button>
        <span className="h-[11px] flex-1 border border-[#bbb] bg-white" />
        <span className="w-3" />
        <button aria-label="Scorri a destra" className="mr-[13px] flex h-[11px] w-[11px] items-center justify-center border border-[#ccc] bg-white"><Caret className="-rotate-90 scale-75" /></button>
      </div>
    </div>
  );
}

function StatusBar() {
  return (
    <div className="flex h-[15px] items-center justify-end bg-[#f3f3f3] pr-[5px] text-[#555]">
      <button aria-label="Visualizzazione normale" className="flex h-[15px] w-[27px] items-center justify-center bg-[#c8c8c8]"><svg viewBox="0 0 10 10" className="size-[10px]" fill="none" stroke="#555"><path d="M3.500 0v10M6.500 0v10M0 2.500h10M0 5.500h10M0 8.500h10" strokeWidth=".8" /></svg></button>
      <button aria-label="Layout di pagina" className="flex w-[27px] justify-center"><svg viewBox="0 0 10 10" className="size-[10px]" fill="none" stroke="#666"><path d="M.5.5h9v9h-9zM2.500 2.500h5v7h-5zM4 4.500h2M4 6.500h2" strokeWidth=".8" /></svg></button>
      <button aria-label="Anteprima interruzioni" className="flex w-[27px] justify-center"><svg viewBox="0 0 10 10" className="size-[10px]" fill="none" stroke="#666"><path d="M.5 0v9.500h9V0M3.500 0v5.500h3V0" strokeWidth=".8" /></svg></button>
      <button aria-label="Zoom indietro" className="mr-[3px] ml-[3px]"><Minus size={7} /></button>
      <input aria-label="Zoom" type="range" defaultValue="50" className="h-2 w-[68px] appearance-none bg-[linear-gradient(#888,#888)] bg-[length:100%_1px] bg-center bg-no-repeat [&::-webkit-slider-thumb]:h-2 [&::-webkit-slider-thumb]:w-[3px] [&::-webkit-slider-thumb]:appearance-none [&::-webkit-slider-thumb]:bg-[#555]" />
      <button aria-label="Zoom avanti" className="ml-[3px]"><Plus size={7} /></button>
      <span className="ml-2 text-[7px]">100%</span>
    </div>
  );
}

/* ---------- taskbar ---------- */

const Tile = ({ letter, dark, light }) => (
  <svg viewBox="0 0 18 18" className="size-[17px]">
    <path d="M5 1h12v16H5z" fill={light} /><path d="M5 9h12v8H5z" fill={dark} opacity=".6" /><path d="M0 4h10v10H0z" fill={dark} />
    <text x="5" y="12" textAnchor="middle" fontSize="8" fontWeight="700" fill="#fff" fontFamily="Open Sans">{letter}</text>
  </svg>
);
const Svg = ({ children }) => <svg viewBox="0 0 18 18" className="size-[17px]">{children}</svg>;

const APPS = [
  ["Start", <Svg><path d="M3.500 4.500 8 4v4.500H3.500zM8.500 4l6.500-1v5.500H8.500zM3.500 9.500H8V14l-4.500-.5zM8.500 9.500H15V15l-6.500-1z" fill="#fff" /></Svg>],
  ["Cerca", <Search size={17} color="#fff" className="-scale-x-100" />],
  ["Pannello", <Svg><path d="M2 4h14v10H2z" fill="#5cb8f0" /><path d="M4 6h4v4H4z" fill="#fff" /><path d="M10 6h4v1h-4zM10 9h4v1h-4zM4 12h10v1H4z" fill="#fff" /></Svg>],
  ["Esplora file", <Svg><path d="M1 2h6l1.500 2H17v12H1z" fill="#f5b83d" /><path d="M1 6h16v10H1z" fill="#ffd977" /><path d="M4 11h10v5h-2v-3H6v3H4z" fill="#3f8fd8" /></Svg>, true],
  ["Store", <Svg><path d="M2 5h14v12H2z" fill="#fff" /><path d="M6 5V2h6v3" fill="none" stroke="#7cc4f5" strokeWidth="1.500" /><path d="M5.500 7.500H8.500v3h-3z" fill="#f25022" /><path d="M9.500 7.500h3v3h-3z" fill="#7fba00" /><path d="M5.500 11.500h3v3h-3z" fill="#00a4ef" /><path d="M9.500 11.500h3v3h-3z" fill="#ffb900" /></Svg>],
  ["Posta", <Svg><path d="M1 8c0-5 6-8 9-6l6-1-2 4c4 4 1 11-5 11S1 13 1 8z" fill="#2f86e0" /><path d="M2 6l7 5 6-6" stroke="#cfe4fa" strokeWidth="2" fill="none" /><circle cx="12.500" cy="12.500" r="5" fill="#e0182d" /><text x="12.500" y="15.500" textAnchor="middle" fontSize="8" fill="#fff" fontFamily="Open Sans">2</text></Svg>, true],
  ["Firefox", <Svg><circle cx="9" cy="10" r="8" fill="#ff7a1a" /><path d="M10 0c4 3 7 6 7 10a8 8 0 0 1-14 5c6 2 10-2 9-6 0-3-3-4-2-9z" fill="#ffc226" /><path d="M2 4c2 1 3 1 5 2 2 0 4 1 4 4s-5 5-7 2c-2-2-3-5-2-8z" fill="#e6335a" /><circle cx="9" cy="10" r="3" fill="#7a3fd0" /></Svg>, true],
  ["Excel", <Tile letter="X" dark="#107c41" light="#33c481" />, false, true],
  ["Access", <Tile letter="A" dark="#a4262c" light="#d8555c" />],
  ["Word", <Tile letter="W" dark="#185abd" light="#41a5ee" />, true],
  ["Publisher", <Tile letter="P" dark="#077568" light="#37c6b0" />],
  ["PowerPoint", <Svg><circle cx="10" cy="9" r="8" fill="#ed6c47" /><path d="M10 1a8 8 0 0 1 8 8h-8z" fill="#ff8f6b" /><path d="M0 4h10v10H0z" fill="#c43e1c" /><text x="5" y="12" textAnchor="middle" fontSize="8" fontWeight="700" fill="#fff" fontFamily="Open Sans">P</text></Svg>],
  ["TeamViewer", <Svg><path d="M0 0h18v18H0z" fill="#0e71eb" /><circle cx="9" cy="9" r="7" fill="#fff" /><path d="M3 9l4-3v2h4V6l4 3-4 3v-2H7v2z" fill="#0e71eb" /></Svg>],
  ["Assistenza", <Svg><circle cx="8" cy="10" r="6.500" fill="#d8eefa" /><path d="M9 6l3 2-2 6-3 2-2-4z" fill="#2495cf" /><path d="M8 8l6-7 2 3-6 7z" fill="#49b4e8" /></Svg>, true],
  ["Terminale", <Svg><path d="M0 0h18v18H0z" fill="#25c9d0" /><path d="M4 6h10M4 8.500h10M4 11h10" stroke="#0c6a70" strokeWidth="1.500" strokeDasharray="3 1" /></Svg>],
  ["Desktop remoto", <Svg><path d="M1 1l11-1v10L3 12z" fill="#dfe6f4" /><path d="M2.500 2.500 11 1.500v7l-7 1.500z" fill="#2440c0" /><path d="M7 12h9l1 4H9z" fill="#c9d3e6" /><circle cx="10" cy="13" r="3" fill="#8fa5cc" /></Svg>],
  ["Skype", <Svg><circle cx="6" cy="6" r="5" fill="#00a8ec" /><circle cx="12" cy="12" r="5" fill="#00a8ec" /><circle cx="9" cy="9" r="7" fill="#00a8ec" /><text x="9" y="13" textAnchor="middle" fontSize="11" fontWeight="700" fill="#fff" fontFamily="Open Sans">S</text></Svg>],
  ["Edge", <Svg><circle cx="9" cy="9" r="8" fill="#1b7fd0" /><path d="M1.500 7C3 2 7 1 9 1c5 0 8 3 8 7 0 3-3 4-6 3 1-3 0-5-3-5-3-1-5 0-6.500 1z" fill="#4fd08a" /><path d="M1 9c1-4 7-5 9-2-3 1-4 5-1 7 3 2 5 1 7 0-2 3-5 3.500-8 3C3 16 1 13 1 9z" fill="#1565b8" /></Svg>],
  ["Opera", <FaOpera size={16} color="#ee1c2e" />],
  ["Scacchi", <Svg><path d="M5 4 9 1l4 3-1 4 4 4v5H3v-5l3-3z" fill="#e9dfcf" /><path d="M3 12h13M7 5h4M9 9v6" stroke="#7a5b43" /><path d="M11 13h6v4h-6z" fill="#c8352c" /></Svg>],
  ["Archivio", <Svg><path d="M1 1h16v16H1z" fill="#1d36a8" /><path d="M4 3h10v2H4zM5 7h8l2 7H3z" fill="#fff" /><path d="M6 12l3-3 3 3z" fill="#1d36a8" /></Svg>],
  ["Acrobat", <Svg><path d="M1 1h16v16H1z" fill="#b30b00" /><path d="M4 13c3-2 5-6 5-9 0 4 3 6 5 7-3-1-7 0-10 2z" fill="none" stroke="#fff" strokeWidth="1.500" /></Svg>],
  ["CCleaner", <Svg><circle cx="9" cy="9" r="8" fill="#072238" stroke="#1f9be0" strokeWidth="1.500" /><text x="9" y="13" textAnchor="middle" fontSize="11" fontWeight="700" fontStyle="italic" fill="#37b3f5" fontFamily="Open Sans">C</text></Svg>],
  ["WhatsApp", <FaWhatsapp size={18} color="#2bd366" />, true],
  ["iCloud", <Svg><rect width="18" height="18" rx="4" fill="#fff" /><path d="M5 13a3 3 0 0 1 0-6 4 4 0 0 1 7-1 3.500 3.500 0 0 1 1 7z" fill="#3b9df5" /></Svg>],
  ["Memo", <Svg><path d="M1 1h16v16H1z" fill="#ffd400" /><path d="M9 10h8l-7 7H9z" fill="#333" /></Svg>],
];

function Taskbar() {
  return (
    <footer className="flex h-[27px] items-center bg-[linear-gradient(90deg,#181818_0%,#1e1b1a_15%,#382d2a_35%,#3c302c_80%,#1c1918_94%,#151515_100%)] pr-[10px] text-white">
      <nav className="flex h-full w-[863px] shrink-0">
        {APPS.map(([name, icon, open, active]) => (
          <button key={name} aria-label={name} className={`flex flex-1 items-center justify-center border-b ${open ? "border-[#8ab8e0]" : "border-transparent"} ${active ? "bg-[#5b5552]" : ""}`}>{icon}</button>
        ))}
      </nav>
      <div className="ml-auto flex items-center">
        <svg viewBox="0 0 18 18" className="size-4"><circle cx="8" cy="8" r="7" fill="#f79a2b" /><path d="M7 16a3 3 0 0 1 0-6 4 4 0 0 1 7 1 2.500 2.500 0 0 1 1 5z" fill="#cfdcf2" /></svg>
        <span className="ml-[5px] text-[9px] whitespace-nowrap">17°C&nbsp; Soleggiato</span>
        <ChevronUp size={10} className="ml-[15px]" />
        <Volume1 size={13} className="ml-1" />
        <time className="ml-[6px] text-center font-[Lato] text-[8px] leading-[12px]">15:28<br />21/02/2024</time>
        <svg viewBox="0 0 18 18" className="ml-3 size-[17px]"><path d="M1 2h12v9H7l-3 3v-3H1z" fill="#fff" /><path d="M3 5h8M3 8h8" stroke="#333" /><circle cx="12.500" cy="12.500" r="4.500" fill="#333" stroke="#999" /><text x="12.500" y="15" textAnchor="middle" fontSize="7" fill="#fff" fontFamily="Open Sans">1</text></svg>
      </div>
    </footer>
  );
}

export default function App() {
  return (
    <main className="min-h-screen bg-white px-[73px] pt-[59px] text-black">
      <p className="h-[46px] font-[Liberation_Serif,serif] text-[21px] leading-6 whitespace-nowrap">
        Tabella pivot analisi principali OBBLIGAZIONI da negativi con medie, max e minimi (storico dal 2020, anno, sei mesi, tre mesi, 1 mese).
      </p>
      <div className="-mr-px overflow-hidden bg-[#e6e6e6] font-[Open_Sans,sans-serif] text-[8px] leading-[10px]">
        <Header />
        <Ribbon />
        <FormulaBar />
        <Sheet />
        <SheetTabs />
        <StatusBar />
        <Taskbar />
      </div>
    </main>
  );
}
